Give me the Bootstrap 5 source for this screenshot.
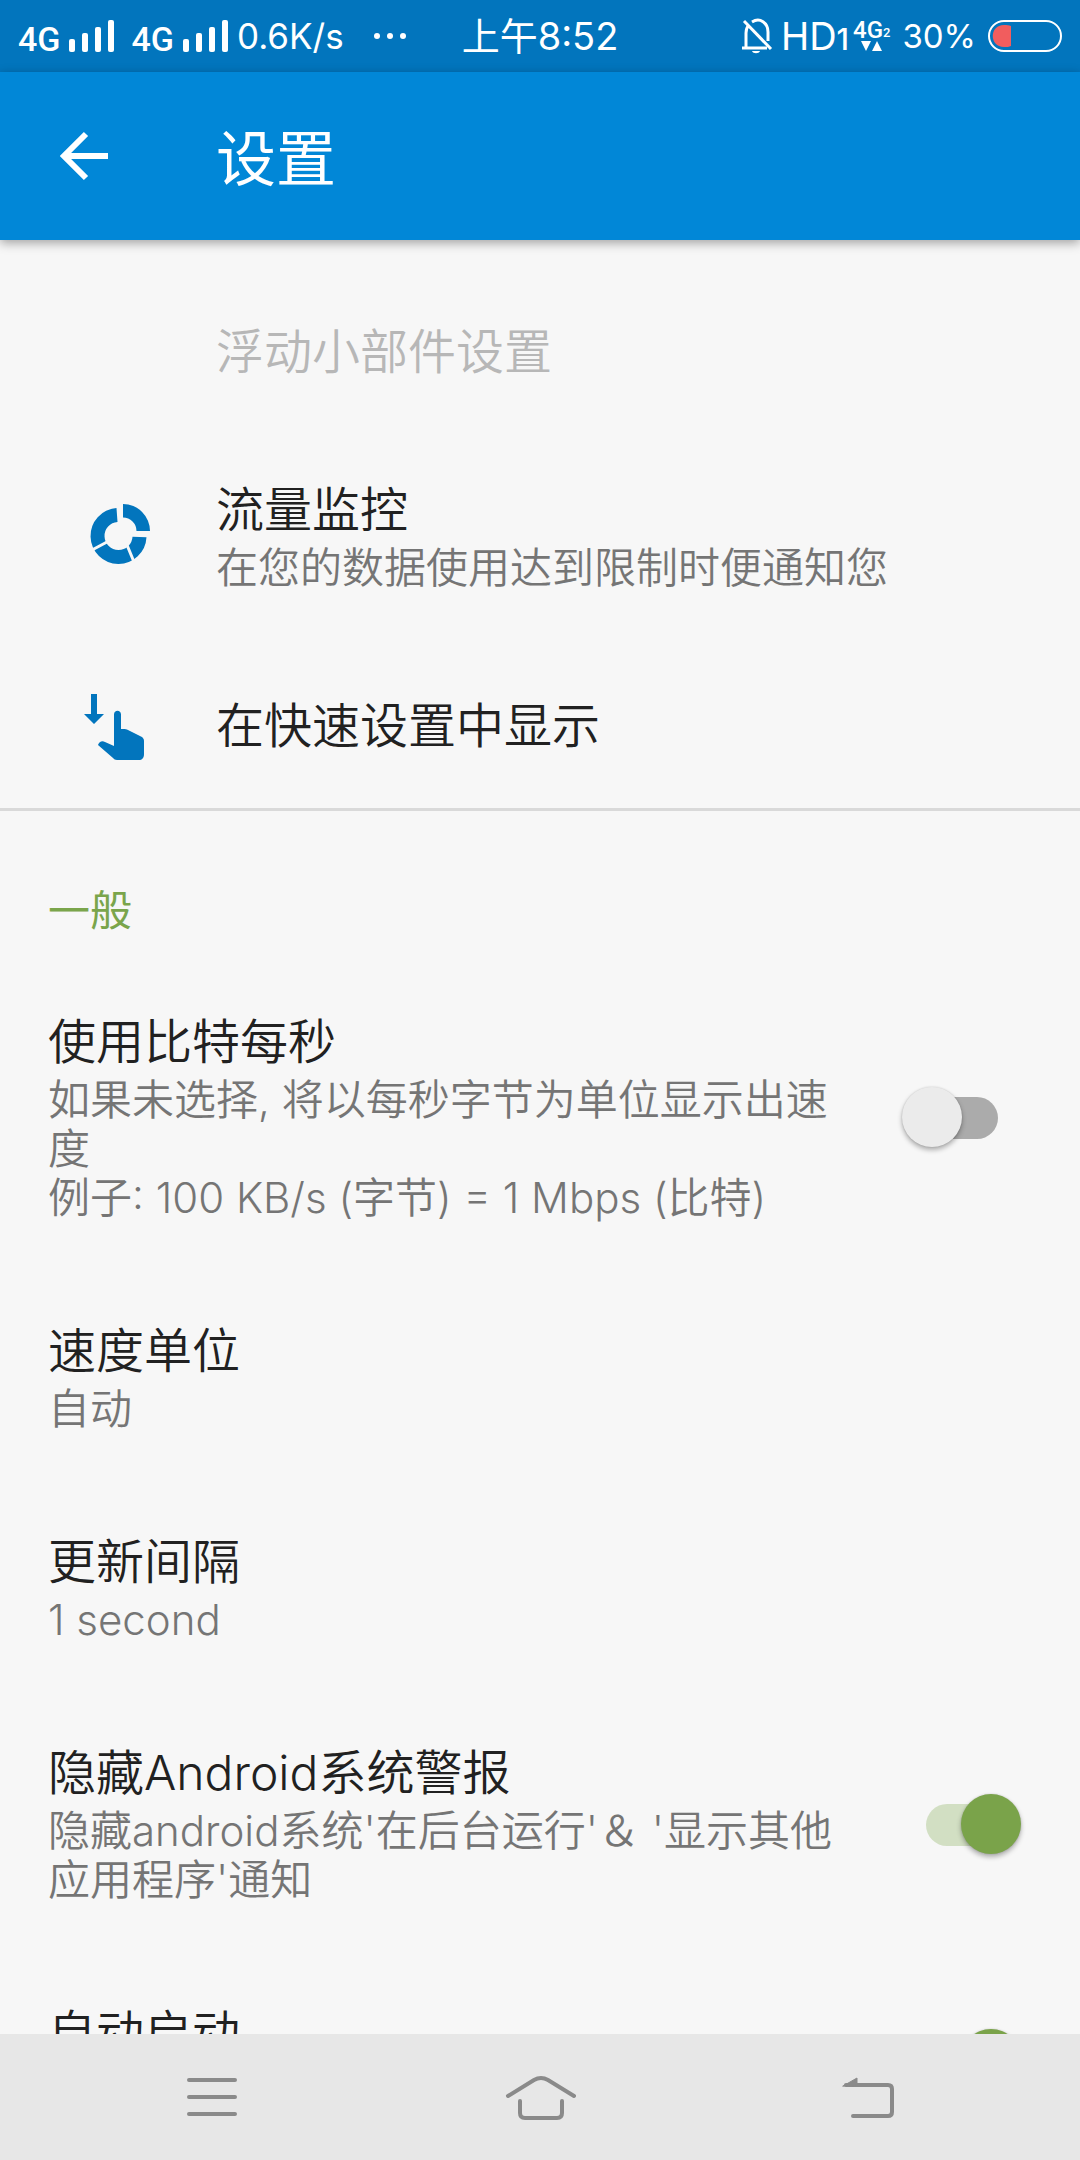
<!DOCTYPE html>
<html lang="zh-CN">
<head>
<meta charset="utf-8">
<meta name="viewport" content="width=device-width, initial-scale=1">
<title>设置</title>
<link href="https://cdn.jsdelivr.net/npm/bootstrap@5.3.0/dist/css/bootstrap.min.css" rel="stylesheet">
<style>
  body { background: #f7f7f7; color: #212121; font-family: Inter, "Noto Sans CJK SC", sans-serif; font-weight: 350; }
  svg { display: block; flex: none; }
  .status-bar { height: 72px; background: #0275bd; color: #fff; font-size: 35px; font-weight: 400; line-height: 40px; padding: 0 18px; }
  .status-side { flex: 1 1 0; }
  .net-label { font: 500 34px/40px Roboto, sans-serif; margin-right: 9px; padding-top: 6px; }
  .status-gap { margin-left: 12px; }
  .battery-text { font-size: 33px; }
  .clock { font-size: 38px; }
  .hd { font-size: 38px; }
  .hd-slot { font-size: 30px; font-weight: 500; padding-top: 6px; }
  .net-mini { font: 500 24px/20px Roboto, sans-serif; }
  .net-mini-slot { font-size: 13px; line-height: 14px; }
  .app-bar { height: 168px; background: #0187d7; color: #fff; padding: 0 52px; box-shadow: 0 3px 10px rgba(0,0,0,.35); z-index: 1; }
  .app-title { font-size: 60px; line-height: 80px; font-weight: 400; margin: 0 0 0 98px; padding-top: 6px; }
  .pref-list { padding-top: 33px; }
  .pref { color: inherit; text-decoration: none; padding: 51px 48px 50px; }
  .pref-tile { padding-top: 49px; padding-bottom: 47px; }
  .pref-off { color: #b7b7b7; padding-top: 51px; padding-bottom: 51px; }
  .pref-icon { width: 168px; padding-left: 32px; flex: none; }
  .pref-icon-chart { padding-bottom: 6px; }
  .pref-name { font-size: 48px; line-height: 56px; }
  .pref-note { font-size: 42px; line-height: 49px; margin-top: 5px; color: #757575; }
  .pref-note-empty { height: 49px; }
  .pref-switch { width: 182px; flex: none; padding-right: 20px; }
  .rule { height: 3px; background: #d9d9d9; }
  .pref-group { font-size: 42px; line-height: 50px; color: #7aa54b; font-weight: 400; margin: 0; padding: 75px 48px 27px; }
  .toggle { appearance: none; width: 86px; height: 42px; margin: 0 14px 0 0; border-radius: 21px; background: #ababab; }
  .toggle::after { content: ""; display: block; width: 60px; height: 60px; margin: -10px 0 0 -10px; border-radius: 50%; background: #ebebeb; box-shadow: 0 3px 5px rgba(0,0,0,.3), 0 0 2px rgba(0,0,0,.15); }
  .toggle:checked { margin-right: 0; background: #d2dfc3; }
  .toggle:checked::after { margin-left: 35px; background: #7aa34a; }
  .nav-bar { height: 126px; background: #e7e7e7; z-index: 1; }
</style>
</head>
<body class="vh-100 d-flex flex-column overflow-hidden">

<div class="status-bar d-flex align-items-center flex-shrink-0">
  <div class="status-side d-flex align-items-center">
    <span class="net-label">4G</span>
    <svg width="46" height="32" viewBox="0 0 46 32" fill="#fff"><rect y="19" width="6" height="13" rx="2"/><rect x="13" y="13" width="6" height="19" rx="2"/><rect x="26" y="7" width="6" height="25" rx="2"/><rect x="39" width="6" height="32" rx="2"/></svg>
    <span class="net-label ms-3">4G</span>
    <svg width="46" height="32" viewBox="0 0 46 32" fill="#fff"><rect y="19" width="6" height="13" rx="2"/><rect x="13" y="13" width="6" height="19" rx="2"/><rect x="26" y="7" width="6" height="25" rx="2"/><rect x="39" width="6" height="32" rx="2"/></svg>
    <span class="ms-2">0.6K/s</span>
    <svg class="ms-4" width="50" height="8" viewBox="0 0 50 8" fill="#fff"><circle cx="9" cy="4" r="3"/><circle cx="22" cy="4" r="3"/><circle cx="35" cy="4" r="3"/></svg>
  </div>
  <div class="clock">上午8:52</div>
  <div class="status-side d-flex align-items-center justify-content-end">
    <svg width="32" height="36" viewBox="0 0 32 36" fill="none" stroke="#fff" stroke-width="3"><path d="M5 29V15c0-3 1-6 3-8M11 4c8-5 16 1 16 10v9M1 30h25"/><path d="M3 3l27 28"/><path d="M11 33h8c-1 3-7 3-8 0z" fill="#fff" stroke="none"/></svg>
    <span class="hd ms-2">HD</span><span class="hd-slot">1</span>
    <div class="ms-1">
      <div class="net-mini d-flex align-items-end">4G<span class="net-mini-slot">2</span></div>
      <svg class="ms-2" width="22" height="12" viewBox="0 0 22 12" fill="#fff"><path d="M0 1h10l-5 10zM11 11h10L16 1z"/></svg>
    </div>
    <span class="battery-text status-gap">30%</span>
    <svg class="status-gap" width="74" height="32" viewBox="0 0 74 32"><rect x="1" y="1" width="72" height="30" rx="15" fill="none" stroke="#fff" stroke-width="2"/><path d="M23 6v20c-2 1-4 1-7 1C1 27 1 5 16 5c3 0 5 0 7 1z" fill="#f15d5e"/></svg>
  </div>
</div>

<header class="app-bar d-flex align-items-center flex-shrink-0 position-relative">
  <button type="button" class="btn p-0 border-0" aria-label="返回">
    <svg width="66" height="66" viewBox="0 0 66 66" fill="none" stroke="#fff" stroke-width="6"><path d="M56 33H12M34 11L12 33l22 22"/></svg>
  </button>
  <h1 class="app-title">设置</h1>
</header>

<main class="flex-grow-1 overflow-hidden">
  <div class="pref-list">
    <div class="pref pref-off d-flex align-items-center" aria-disabled="true">
      <div class="pref-icon"></div>
      <div class="pref-name">浮动小部件设置</div>
    </div>
    <a href="#" class="pref d-flex align-items-center">
      <div class="pref-icon pref-icon-chart">
        <svg width="78" height="64" viewBox="-7 0 78 64"><path d="M52.500 35A21 21 0 1 1 30 13" fill="none" stroke="#0275bd" stroke-width="14"/><path d="M36 2a27 27 0 0 1 27 27H49.500A13.500 13.500 0 0 0 36 15.500z" fill="#0275bd"/><path d="M5 48l15-8M40 43l7 17" stroke="#f7f7f7" stroke-width="3"/></svg>
      </div>
      <div>
        <div class="pref-name">流量监控</div>
        <div class="pref-note">在您的数据使用达到限制时便通知您</div>
      </div>
    </a>
    <a href="#" class="pref pref-tile d-flex align-items-center">
      <div class="pref-icon">
        <svg width="66" height="70" viewBox="-1 -1 66 70" fill="#0275bd"><path d="M10 2h6v20h7l-10 10L3 22h7z"/><path d="M33 54V22.500c0-5 7-5 7 0V37h3.500c1 0 2 .3 3 .8L60 44.500c2 1 3 2.500 3 4.500v13c0 4-2 6-5 6H36c-2 0-3-1-4-2L17 53c1-3 4-5 7-3z"/></svg>
      </div>
      <div class="pref-name">在快速设置中显示</div>
    </a>
  </div>
  <div class="rule"></div>
  <h2 class="pref-group">一般</h2>
  <div>
    <label class="pref d-flex align-items-center">
      <span class="flex-grow-1">
        <span class="pref-name d-block">使用比特每秒</span>
        <span class="pref-note d-block">如果未选择, 将以每秒字节为单位显示出速度<br>例子: 100 KB/s (字节) = 1 Mbps (比特)</span>
      </span>
      <span class="pref-switch d-flex justify-content-end"><input type="checkbox" role="switch" class="toggle"></span>
    </label>
    <a href="#" class="pref d-block">
      <div class="pref-name">速度单位</div>
      <div class="pref-note">自动</div>
    </a>
    <a href="#" class="pref d-block">
      <div class="pref-name">更新间隔</div>
      <div class="pref-note">1 second</div>
    </a>
    <label class="pref d-flex align-items-center">
      <span class="flex-grow-1">
        <span class="pref-name d-block">隐藏Android系统警报</span>
        <span class="pref-note d-block">隐藏android系统'在后台运行'＆ '显示其他应用程序'通知</span>
      </span>
      <span class="pref-switch d-flex justify-content-end"><input type="checkbox" role="switch" class="toggle" checked></span>
    </label>
    <label class="pref d-flex align-items-center">
      <span class="flex-grow-1">
        <span class="pref-name d-block">自动启动</span>
        <span class="pref-note pref-note-empty d-block"></span>
      </span>
      <span class="pref-switch d-flex justify-content-end"><input type="checkbox" role="switch" class="toggle" checked></span>
    </label>
  </div>
</main>

<nav class="nav-bar d-flex align-items-center px-5 flex-shrink-0" aria-label="系统导航">
  <button type="button" class="btn border-0 p-0 flex-fill d-flex justify-content-center w-100" aria-label="菜单">
    <svg width="54" height="42" viewBox="0 0 54 42" stroke="#8a8a8a" stroke-width="4" stroke-linecap="round"><path d="M4 4h46M4 21h46M4 38h46"/></svg>
  </button>
  <button type="button" class="btn border-0 p-0 flex-fill d-flex justify-content-center w-100" aria-label="主屏幕">
    <svg width="72" height="46" viewBox="0 0 72 46" fill="none" stroke="#8a8a8a" stroke-width="4" stroke-linecap="round"><path d="M4 22L30 6q7-4 14 0L70 22M16 27v12q0 5 5 5h32q5 0 5-5V27"/></svg>
  </button>
  <button type="button" class="btn border-0 p-0 flex-fill d-flex justify-content-center w-100" aria-label="返回">
    <svg width="52" height="44" viewBox="0 0 52 44" fill="none" stroke="#8a8a8a" stroke-width="4" stroke-linecap="round"><path d="M4 10h42q4 0 4 4v23q0 4-4 4H11"/><path d="M1 11L15 3v7z" fill="#8a8a8a" stroke-width="1"/></svg>
  </button>
</nav>

<script src="https://cdn.jsdelivr.net/npm/bootstrap@5.3.0/dist/js/bootstrap.bundle.min.js"></script>
</body>
</html>
